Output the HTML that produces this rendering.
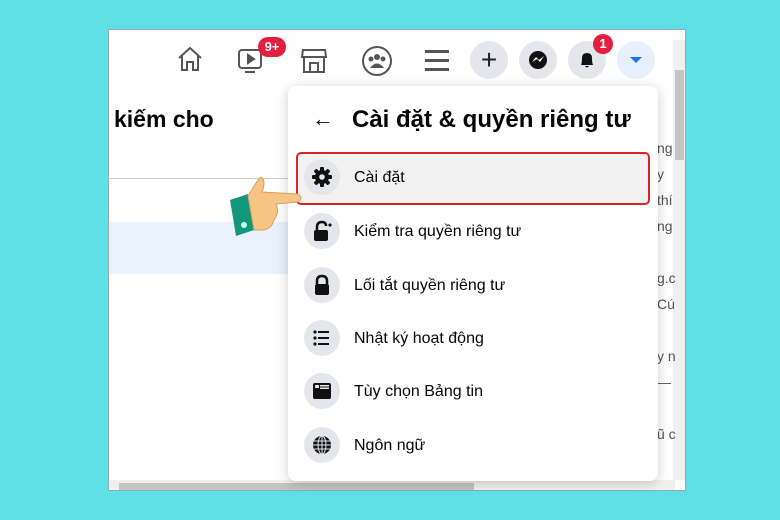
<!DOCTYPE html><html><head><meta charset="utf-8"><style>
body{margin:0;width:780px;height:520px;background:#5fe0e6;position:relative;overflow:hidden;font-family:"Liberation Sans",sans-serif;color:#050505}
.win{position:absolute;left:108px;top:29px;width:578px;height:462px;background:#fff;border:1px solid #9aa;box-sizing:border-box;overflow:hidden}
.a{position:absolute}
.circ{position:absolute;width:38px;height:38px;border-radius:50%;background:#e4e6eb}
.ic{position:absolute;left:304px;width:36px;height:36px;border-radius:50%;background:#e4e6eb}
.it{position:absolute;left:354px;font-size:16px}
</style></head><body>
<div class="win">
 <div class="a" style="left:0;top:148px;width:190px;height:1px;background:#ccc"></div>
 <div class="a" style="left:0;top:192px;width:190px;height:52px;background:#e8f1fc"></div>
 <div class="a" style="left:5px;top:76px;font-size:23px;font-weight:bold">kiếm cho</div>
 <div class="a" style="left:564px;top:10px;width:12px;height:440px;background:#f0f0f0"></div>
 <div class="a" style="left:566px;top:40px;width:9px;height:90px;background:#c4c4c4"></div>
 <div class="a" style="left:0;top:450px;width:566px;height:12px;background:#f0f0f0"></div>
 <div class="a" style="left:10px;top:453px;width:355px;height:7px;background:#c4c4c4"></div>
 <div class="a" style="left:548px;top:105px;font-size:14px;color:#555;line-height:26px">ng<br>y<br>thí<br>ng<br><br>g.c<br>Cú<br><br>y n<br>—<br><br>ũ c</div>
</div>
<svg class="a" style="left:175px;top:44px" width="30" height="30" viewBox="0 0 30 30" fill="none" stroke="#555" stroke-width="2"><path d="M4 14 L15 4 L26 14 M7 12 V26 H12 V18 H18 V26 H23 V12"/></svg>
<svg class="a" style="left:236px;top:46px" width="30" height="30" viewBox="0 0 30 30" fill="none" stroke="#555" stroke-width="2"><rect x="3" y="4" width="22" height="18" rx="3"/><path d="M12 9 L18 13 L12 17Z" fill="#555"/><path d="M9 26 H19"/></svg>
<div class="a" style="left:258px;top:37px;width:28px;height:20px;border-radius:10px;background:#e41e3f;color:#fff;font-size:13px;font-weight:bold;text-align:center;line-height:20px">9+</div>
<svg class="a" style="left:299px;top:46px" width="30" height="30" viewBox="0 0 30 30" fill="none" stroke="#555" stroke-width="2"><path d="M4 4 H26 L27 11 H3 Z M5 11 V26 H25 V11 M11 26 V17 H19 V26"/></svg>
<svg class="a" style="left:361px;top:45px" width="32" height="32" viewBox="0 0 32 32"><circle cx="16" cy="16" r="14" fill="none" stroke="#555" stroke-width="2"/><circle cx="16" cy="12" r="3" fill="#555"/><circle cx="10" cy="14" r="2.5" fill="#555"/><circle cx="22" cy="14" r="2.5" fill="#555"/><path d="M9 23 Q16 14 23 23Z" fill="#555"/></svg>
<svg class="a" style="left:424px;top:48px" width="26" height="24"><rect x="1" y="2" width="24" height="3" fill="#555"/><rect x="1" y="11" width="24" height="3" fill="#555"/><rect x="1" y="20" width="24" height="3" fill="#555"/></svg>
<div class="circ" style="left:470px;top:41px;text-align:center;line-height:38px;font-size:28px;color:#222">+</div>
<div class="circ" style="left:519px;top:41px"><svg width="38" height="38"><circle cx="19" cy="19" r="9" fill="#111"/><path d="M13 21 L17 16 L20 19 L25 15 L21 21 L18 18Z" fill="#fff"/></svg></div>
<div class="circ" style="left:568px;top:41px"><svg width="38" height="38"><path d="M13 24 Q14 22 14 17 Q14 12 19 12 Q24 12 24 17 Q24 22 25 24Z M17 25 Q19 28 21 25Z" fill="#111"/></svg></div>
<div class="a" style="left:593px;top:34px;width:20px;height:20px;border-radius:50%;background:#e41e3f;color:#fff;font-size:13px;font-weight:bold;text-align:center;line-height:20px">1</div>
<div class="circ" style="left:617px;top:41px;background:#e7f0fd"><svg width="38" height="38"><path d="M13 16 H25 L19 22Z" fill="#1877f2"/></svg></div>
<div class="a" style="left:288px;top:86px;width:370px;height:395px;background:#fff;border-radius:8px;box-shadow:0 2px 12px rgba(0,0,0,.2)"></div>
<div class="a" style="left:312px;top:106px;font-size:22px">←</div>
<div class="a" style="left:352px;top:106px;font-size:24px;font-weight:bold">Cài đặt &amp; quyền riêng tư</div>
<div class="a" style="left:296px;top:152px;width:354px;height:53px;border:2px solid #d22;border-radius:5px;box-sizing:border-box;background:#f2f2f2"></div>
<div class="ic" style="top:159px"><svg width="36" height="36"><g fill="#111"><rect x="16" y="8" width="4" height="20" rx="1"/><rect x="16" y="8" width="4" height="20" rx="1" transform="rotate(45 18 18)"/><rect x="16" y="8" width="4" height="20" rx="1" transform="rotate(90 18 18)"/><rect x="16" y="8" width="4" height="20" rx="1" transform="rotate(135 18 18)"/><circle cx="18" cy="18" r="7"/></g><circle cx="18" cy="18" r="2.8" fill="#e4e6eb"/></svg></div>
<div class="it" style="top:169px">Cài đặt</div>
<div class="ic" style="top:213px"><svg width="36" height="36"><path d="M13 17 V14 Q13 9 18 9 Q22 9 22 13" fill="none" stroke="#111" stroke-width="2.5"/><rect x="10" y="17" width="14" height="11" rx="2" fill="#111"/><path d="M24 12 l2-2 2 2-2 2z" fill="#111"/></svg></div>
<div class="it" style="top:223px">Kiểm tra quyền riêng tư</div>
<div class="ic" style="top:267px"><svg width="36" height="36"><path d="M13 17 V14 Q13 9 18 9 Q23 9 23 14 V17" fill="none" stroke="#111" stroke-width="2.5"/><rect x="11" y="17" width="14" height="11" rx="2" fill="#111"/></svg></div>
<div class="it" style="top:277px">Lối tắt quyền riêng tư</div>
<div class="ic" style="top:320px"><svg width="36" height="36" fill="#111"><circle cx="11" cy="12" r="1.6"/><circle cx="11" cy="18" r="1.6"/><circle cx="11" cy="24" r="1.6"/><rect x="14" y="11" width="11" height="2"/><rect x="14" y="17" width="11" height="2"/><rect x="14" y="23" width="11" height="2"/></svg></div>
<div class="it" style="top:330px">Nhật ký hoạt động</div>
<div class="ic" style="top:373px"><svg width="36" height="36"><rect x="9" y="10" width="18" height="16" rx="2" fill="#111"/><rect x="11" y="12" width="4" height="3" fill="#e4e6eb"/><rect x="16" y="12" width="9" height="1.5" fill="#e4e6eb"/><rect x="16" y="14.5" width="9" height="1.5" fill="#e4e6eb"/></svg></div>
<div class="it" style="top:383px">Tùy chọn Bảng tin</div>
<div class="ic" style="top:427px"><svg width="36" height="36"><circle cx="18" cy="18" r="9" fill="#111"/><g stroke="#e4e6eb" stroke-width="1" fill="none"><ellipse cx="18" cy="18" rx="4" ry="9"/><path d="M9 18 H27 M10 14 H26 M10 22 H26 M18 9 V27"/></g></svg></div>
<div class="it" style="top:437px">Ngôn ngữ</div>
<svg class="a" style="left:228px;top:172px" width="76" height="68" viewBox="0 0 76 68"><path d="M2 28 L20 22 L26 58 L8 64Z" fill="#13977a"/><circle cx="16" cy="53" r="3" fill="#bfe"/><path d="M20 24 Q26 14 30 8 Q34 2 36 10 Q36 16 34 20 L70 22 Q76 26 70 30 L48 32 Q52 40 46 48 Q44 56 36 58 L26 58Z" fill="#f6c483" stroke="#d9a060" stroke-width="1"/></svg>
</body></html>
